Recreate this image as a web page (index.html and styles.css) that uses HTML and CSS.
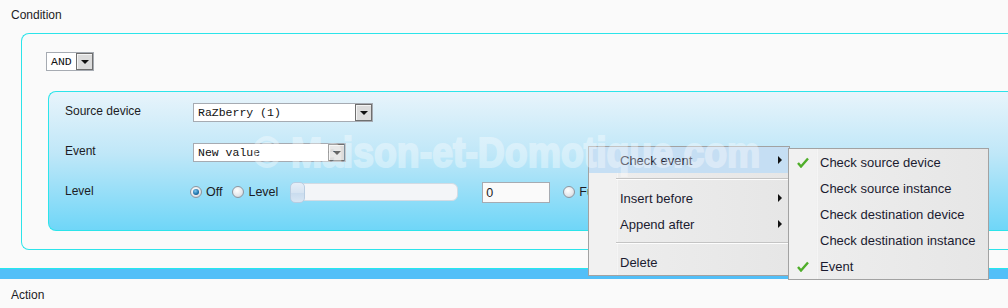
FILE: index.html
```html
<!DOCTYPE html>
<html>

<head>
    <meta charset="utf-8"/>
    <title>Rule editor</title>
    <link rel="stylesheet" href="styles.css">
</head>

<body>
<div class="page">
    <div class="section-title">Condition</div>

    <div class="condition">
        <div class="select select-and">
            <span class="select-value">AND</span>
            <span class="select-btn"><span class="caret"></span></span>
        </div>

        <div class="rule">
            <div class="rule-row">
                <span class="rule-label">Source device</span>
                <div class="select select-device">
                    <span class="select-value">RaZberry (1)</span>
                    <span class="select-btn"><span class="caret"></span></span>
                </div>
            </div>
            <div class="rule-row">
                <span class="rule-label">Event</span>
                <div class="select select-event">
                    <span class="select-value">New value</span>
                    <span class="select-btn"><span class="caret"></span></span>
                </div>
            </div>
            <div class="rule-row">
                <span class="rule-label">Level</span>
                <div class="level">
                    <span class="radio checked"></span><span class="radio-text">Off</span>
                    <span class="radio"></span><span class="radio-text">Level</span>
                    <div class="slider"><span class="slider-handle"></span></div>
                    <div class="text-input">0</div>
                    <span class="radio"></span><span class="radio-text">Full</span>
                </div>
            </div>
        </div>
    </div>

    <div class="divider-bar"></div>

    <div class="section-title">Action</div>
</div>

<div class="menu main-menu">
    <div class="menu-item active">Check event<span class="arrow"></span></div>
    <div class="menu-sep"></div>
    <div class="menu-item">Insert before<span class="arrow"></span></div>
    <div class="menu-item">Append after<span class="arrow"></span></div>
    <div class="menu-sep"></div>
    <div class="menu-item">Delete</div>
</div>

<div class="menu sub-menu">
    <div class="menu-item"><svg class="check" viewBox="0 0 12 11"><path d="M1 6 L4 9.5 L11 1.5" fill="none" stroke="#4fae2a" stroke-width="2.4"/></svg>Check source device</div>
    <div class="menu-item">Check source instance</div>
    <div class="menu-item">Check destination device</div>
    <div class="menu-item">Check destination instance</div>
    <div class="menu-item"><svg class="check" viewBox="0 0 12 11"><path d="M1 6 L4 9.5 L11 1.5" fill="none" stroke="#4fae2a" stroke-width="2.4"/></svg>Event</div>
</div>

<div class="watermark">© Maison-et-Domotique.com</div>
</body>

</html>
```

FILE: styles.css
```css
body {
    font-family: "Liberation Sans", Arial, sans-serif;
    font-size: 12px;
    margin: 0;
    background: #fafafa;
    color: #1c1c24;
    overflow: hidden;
    width: 1008px;
    height: 308px;
    position: relative;
}

.section-title {
    padding: 8px 11px 11px;
    line-height: 14px;
}

.condition {
    margin-left: 21px;
    border: 1px solid #2ce4ea;
    border-right: none;
    border-radius: 8px 0 0 8px;
    padding: 18px 0 18px 24px;
}

/* fake windows-classic select */
.select {
    display: flex;
    align-items: center;
    height: 19px;
    box-sizing: border-box;
    border: 1px solid #a6abb2;
    background: #fff;
}

.select-value {
    flex: 1;
    padding-left: 4px;
    font-family: "Liberation Mono", "Courier New", monospace;
    font-size: 11.5px;
    color: #111;
    white-space: nowrap;
}

.select-btn {
    width: 17px;
    height: 17px;
    box-sizing: border-box;
    border: 1px solid #6f6f6f;
    box-shadow: inset 1px 1px 0 #f4f4f4;
    background: #dcdcdc;
    display: flex;
    align-items: center;
    justify-content: center;
}

.caret {
    width: 0;
    height: 0;
    border-left: 4px solid transparent;
    border-right: 4px solid transparent;
    border-top: 4px solid #111;
    margin-top: 1px;
}

.select-and {
    width: 48px;
}

.select-device {
    width: 180px;
}

.select-event {
    width: 153px;
}

.rule {
    margin: 20px 0 0 2px;
    border: 1px solid #2ce4ea;
    border-right: none;
    border-radius: 8px 0 0 8px;
    background: linear-gradient(to bottom, #e8f4fb 0%, #bfe7f8 45%, #6fd6f8 100%);
    padding: 0 0 18px 16px;
}

.rule-row {
    display: grid;
    grid-template-columns: 128px 1fr;
    align-items: center;
    height: 40px;
}

.rule-label {
    margin-top: -3px;
}

.level {
    display: flex;
    align-items: center;
    margin-left: -3px;
}

.radio {
    width: 12px;
    height: 12px;
    box-sizing: border-box;
    border-radius: 50%;
    border: 1px solid #8d96a0;
    background: radial-gradient(circle at 40% 35%, #ffffff 0%, #e3e6ea 60%, #b9bfc6 100%);
    position: relative;
}

.radio.checked::after {
    content: "";
    position: absolute;
    left: 2px;
    top: 2px;
    width: 6px;
    height: 6px;
    border-radius: 50%;
    background: radial-gradient(circle at 40% 35%, #7ec8f0 0%, #1a6fa8 60%, #0d4a78 100%);
}

.radio-text {
    margin: 0 12px 0 4px;
    font-size: 12.5px;
}

.level .radio-text:nth-of-type(2) {
    margin-right: 10px;
}

.slider {
    width: 168px;
    height: 18px;
    box-sizing: border-box;
    border: 1px solid #d2dbe4;
    border-radius: 6px;
    background: #f3f5f8;
    position: relative;
    margin-right: 24px;
}

.slider-handle {
    position: absolute;
    left: -1px;
    top: -2px;
    width: 15px;
    height: 21px;
    box-sizing: border-box;
    border: 1px solid #b8cde2;
    border-radius: 5px;
    background: linear-gradient(to bottom, #e6eef7 0%, #d6e4f2 50%, #c8dbee 51%, #d8e6f3 100%);
}

.text-input {
    width: 68px;
    height: 21px;
    box-sizing: border-box;
    border: 1px solid #a6abb2;
    background: #fafafa;
    padding: 3px 0 0 3px;
    font-size: 12.5px;
    margin-right: 13px;
}

.divider-bar {
    margin-top: 18px;
    height: 11px;
    box-sizing: border-box;
    border-top: 1px solid #22e8ee;
    background: #52bff8;
}

.divider-bar + .section-title {
    padding-top: 9px;
}

/* context menu */
.menu {
    position: absolute;
    box-sizing: border-box;
    border: 1px solid #a2a2a2;
    background: linear-gradient(to right, #f1f1f1 0, #f1f1f1 27px, #e2e2e2 27px, #fdfdfd 28px, #ededed 29px, #e6e6e6 100%);
    font-size: 13px;
    z-index: 10;
}

.main-menu {
    left: 588px;
    top: 146px;
    width: 202px;
    height: 130px;
}

.sub-menu {
    left: 788px;
    top: 148px;
    width: 201px;
    height: 132px;
    z-index: 11;
}

.menu-item {
    position: relative;
    height: 26px;
    line-height: 27px;
    padding-left: 31px;
    color: #1b1b30;
    white-space: nowrap;
}

.menu-item.active {
    background: rgba(190, 220, 244, 0.85);
}

.arrow {
    position: absolute;
    right: 7px;
    top: 9px;
    width: 0;
    height: 0;
    border-top: 4px solid transparent;
    border-bottom: 4px solid transparent;
    border-left: 4px solid #111;
}

.menu-sep {
    height: 12px;
    margin-left: 27px;
    background: linear-gradient(to bottom, transparent 5px, #c4c4c4 5px, #c4c4c4 6px, #fdfdfd 6px, #fdfdfd 7px, transparent 7px);
}

.check {
    position: absolute;
    left: 8px;
    top: 8px;
    width: 12px;
    height: 11px;
}

.watermark {
    position: absolute;
    left: 253px;
    top: 129px;
    font-size: 42px;
    font-weight: bold;
    line-height: 48px;
    color: #fff;
    -webkit-text-stroke: 2px #fff;
    opacity: 0.36;
    white-space: nowrap;
    transform: scaleX(0.89);
    transform-origin: left top;
    z-index: 20;
    pointer-events: none;
}
```
